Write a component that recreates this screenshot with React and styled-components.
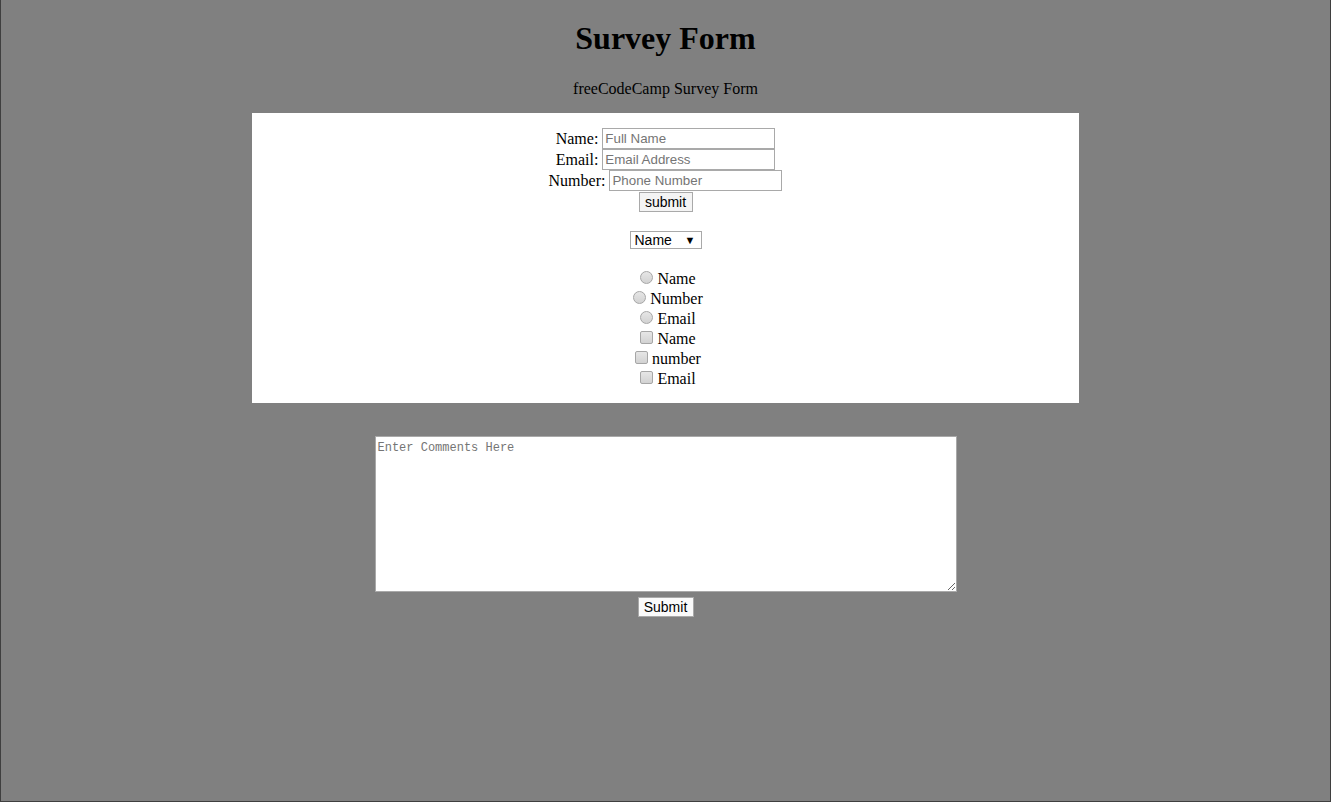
import React from "react";
import styled, { createGlobalStyle } from "styled-components";

const GlobalStyle = createGlobalStyle`
  html, body {
    margin: 0;
    padding: 0;
    background: #808080;
  }
  body {
    font-family: "Liberation Serif", "Times New Roman", serif;
    font-size: 16px;
    color: #000;
  }
`;

const Page = styled.div`
  box-sizing: border-box;
  width: 1331px;
  height: 802px;
  border: 1px solid #3f3f3f;
  border-top: none;
  background: #808080;
  text-align: center;
  display: flow-root;
`;

const Title = styled.h1`
  font-size: 32px;
  font-weight: bold;
  line-height: 37px;
  margin: 20px 0 23px;
`;

const Subtitle = styled.p`
  margin: 0 0 15px;
  line-height: 18px;
`;

const Card = styled.form`
  width: 827px;
  margin: 0 auto;
  background: #fff;
  padding: 15px 0 14px;
  box-sizing: border-box;
`;

const Row = styled.div`
  height: 21px;
  line-height: 21px;
  display: flex;
  justify-content: center;
  align-items: center;
  gap: 4px;
`;

const TextInput = styled.input`
  box-sizing: border-box;
  width: 173px;
  height: 21px;
  padding: 1px 2px;
  border: 1px solid #a9a9a9;
  font-family: "Liberation Sans", Arial, sans-serif;
  font-size: 13.33px;
  color: #000;
  background: #fff;
  outline: none;
  &::placeholder {
    color: #757575;
  }
`;

const SmallButton = styled.button`
  box-sizing: border-box;
  height: 20px;
  padding: 0 4px;
  border: 1px solid #a9a9a9;
  border-radius: 0;
  background: ${(p) => (p.$light ? "#fafafa" : "#f4f4f4")};
  font-family: "Liberation Sans", Arial, sans-serif;
  font-size: 14px;
  line-height: 18px;
  color: #000;
  width: ${(p) => p.$width}px;
`;

const ButtonRow = styled.div`
  display: flex;
  justify-content: center;
  margin-top: ${(p) => p.$top || 0}px;
`;

const SelectWrap = styled.div`
  display: flex;
  justify-content: center;
  margin: 19px 0 20px;
`;

const Select = styled.div`
  box-sizing: border-box;
  width: 72px;
  height: 18px;
  border: 1px solid #a9a9a9;
  display: flex;
  align-items: center;
  justify-content: space-between;
  padding: 0 5px 0 4px;
  font-family: "Liberation Sans", Arial, sans-serif;
  font-size: 14px;
  background: #fff;
`;

const Arrow = styled.span`
  font-size: 11px;
`;

const Choice = styled.label`
  display: flex;
  justify-content: center;
  align-items: center;
  height: 20px;
  line-height: 20px;
`;

const Mark = styled.input`
  appearance: none;
  -webkit-appearance: none;
  box-sizing: border-box;
  width: 13px;
  height: 13px;
  margin: -4px 4px 0 5px;
  border: 1px solid #a6a6a6;
  border-radius: ${(p) => (p.type === "radio" ? "50%" : "2px")};
  background: linear-gradient(#e6e6e6, #d2d2d2);
`;

const Comments = styled.textarea`
  display: block;
  box-sizing: border-box;
  width: 582px;
  height: 156px;
  margin: 33px auto 5px;
  padding: 4px 2px;
  border: 1px solid #a9a9a9;
  background: #fff;
  font-family: "Liberation Mono", "Courier New", monospace;
  font-size: 12px;
  resize: both;
  outline: none;
  &::placeholder {
    color: #757575;
  }
`;

const fields = [
  { label: "Name:", placeholder: "Full Name" },
  { label: "Email:", placeholder: "Email Address" },
  { label: "Number:", placeholder: "Phone Number" },
];

const choices = [
  { type: "radio", text: "Name" },
  { type: "radio", text: "Number" },
  { type: "radio", text: "Email" },
  { type: "checkbox", text: "Name" },
  { type: "checkbox", text: "number" },
  { type: "checkbox", text: "Email" },
];

export default function App() {
  return (
    <>
      <GlobalStyle />
      <Page>
        <Title>Survey Form</Title>
        <Subtitle>freeCodeCamp Survey Form</Subtitle>
        <Card onSubmit={(e) => e.preventDefault()}>
          {fields.map((f) => (
            <Row key={f.label}>
              <span>{f.label}</span>
              <TextInput placeholder={f.placeholder} />
            </Row>
          ))}
          <ButtonRow $top={1}>
            <SmallButton $width={54}>submit</SmallButton>
          </ButtonRow>
          <SelectWrap>
            <Select>
              <span>Name</span>
              <Arrow>▼</Arrow>
            </Select>
          </SelectWrap>
          {choices.map((c, i) => (
            <Choice key={i}>
              <Mark type={c.type} name={c.type === "radio" ? "pick" : undefined} />
              {c.text}
            </Choice>
          ))}
        </Card>
        <Comments placeholder="Enter Comments Here" />
        <ButtonRow>
          <SmallButton $width={56} $light>Submit</SmallButton>
        </ButtonRow>
      </Page>
    </>
  );
}
